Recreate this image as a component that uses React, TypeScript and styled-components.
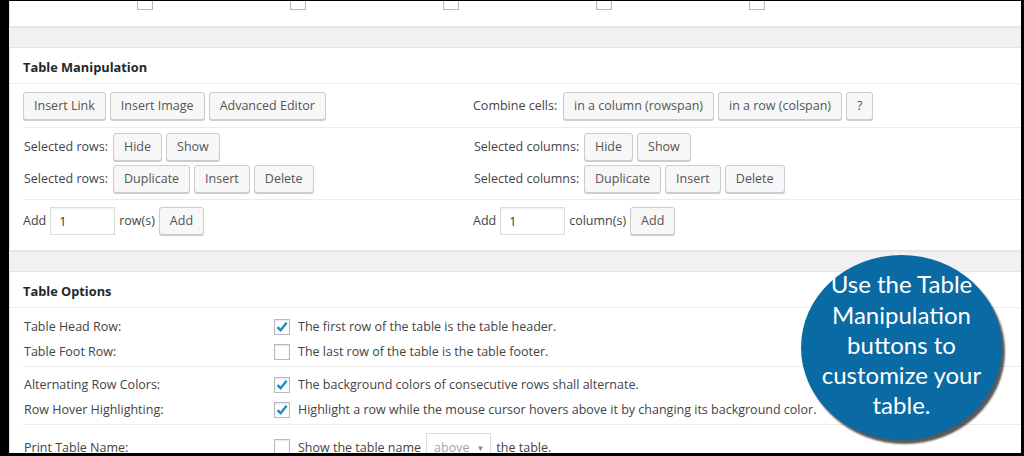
import type { FC, ReactNode } from 'react';
import styled, { createGlobalStyle } from 'styled-components';

const GlobalStyle = createGlobalStyle`
  html, body {
    margin: 0;
    padding: 0;
    background: #000;
  }
  * {
    box-sizing: border-box;
  }
`;

const Frame = styled.div`
  position: relative;
  width: 1024px;
  height: 456px;
  padding: 1px 3px 3px 9px;
  background: #000;
  font-family: 'Open Sans', 'Noto Sans', sans-serif;
  font-size: 12.5px;
  color: #444;
`;

const Screen = styled.div`
  display: flex;
  flex-direction: column;
  gap: 20px;
  height: 100%;
  overflow: hidden;
  background: #f1f1f1;
`;

const Panel = styled.section<{ $clipTop?: boolean }>`
  flex: none;
  margin-right: -2px;
  margin-top: ${(p) => (p.$clipTop ? '-20px' : '0')};
  background: #fff;
  border: 1px solid #e5e5e5;
  box-shadow: 0 1px 1px rgba(0, 0, 0, 0.04);
`;

const PanelTitle = styled.h2`
  margin: 0;
  padding: 10px 13px 7px;
  font-size: 12.8px;
  line-height: 18px;
  font-weight: 700;
  color: #23282d;
  border-bottom: 1px solid #eee;
`;

const CheckStrip = styled.div`
  display: flex;
  padding: 12px 0 16px 127px;
  gap: 137px;
`;

const Body = styled.div`
  padding: 0 0 0 13px;
`;

const Row = styled.div<{ $pad: string; $last?: boolean }>`
  display: grid;
  grid-template-columns: 450px 1fr;
  padding: ${(p) => p.$pad};
  border-bottom: ${(p) => (p.$last ? 'none' : '1px solid #ececec')};
`;

const Cell = styled.div`
  display: flex;
  flex-direction: column;
  gap: 4px;
  padding-left: 1px;
`;

const Line = styled.div`
  display: flex;
  align-items: center;
  gap: 4px;
`;

const Label = styled.span<{ $w?: number }>`
  width: ${(p) => (p.$w ? `${p.$w}px` : 'auto')};
  flex: none;
  white-space: nowrap;
  line-height: 18px;
`;

const Button = styled.button`
  height: 28px;
  padding: 0 10px;
  font: inherit;
  font-size: 12.5px;
  line-height: 26px;
  color: #555;
  background: #f7f7f7;
  border: 1px solid #ccc;
  border-radius: 3px;
  box-shadow: 0 1px 0 #ccc;
  white-space: nowrap;
`;

const NumberInput = styled.input`
  width: 65px;
  height: 28px;
  padding: 0 8px;
  font: inherit;
  font-size: 12.5px;
  color: #32373c;
  background: #fff;
  border: 1px solid #ddd;
  box-shadow: inset 0 1px 2px rgba(0, 0, 0, 0.07);
`;

const OptionGroup = styled.div<{ $pad: string; $last?: boolean }>`
  padding: ${(p) => p.$pad};
  margin-left: 13px;
  border-bottom: ${(p) => (p.$last ? 'none' : '1px solid #ececec')};
`;

const OptionRow = styled.div`
  display: grid;
  grid-template-columns: 250px 1fr;
  align-items: center;
  min-height: 25px;
  padding-left: 1px;
`;

const OptionText = styled.div`
  display: flex;
  align-items: center;
  gap: 8px;
  white-space: nowrap;
`;

const Box = styled.span`
  display: inline-flex;
  align-items: center;
  justify-content: center;
  flex: none;
  width: 16px;
  height: 16px;
  background: #fff;
  border: 1px solid #b4b9be;
  box-shadow: inset 0 1px 2px rgba(0, 0, 0, 0.1);
`;

const Select = styled.span`
  display: inline-flex;
  align-items: center;
  gap: 7px;
  height: 28px;
  margin: 0 -3px 0 -3px;
  padding: 0 6px 0 7px;
  color: #a0a5aa;
  border: 1px solid #ddd;
  background: #fff;
`;

const Caret = styled.span`
  font-size: 8px;
  color: #888;
`;

const Callout = styled.div`
  position: absolute;
  left: 801px;
  top: 255px;
  width: 201px;
  height: 185px;
  display: flex;
  align-items: center;
  justify-content: center;
  padding-bottom: 5px;
  border-radius: 50%;
  background: #0a6aa4;
  box-shadow: 3px 4px 2px rgba(0, 0, 0, 0.65);
  color: #fff;
  font-family: Lato, 'Open Sans', sans-serif;
  font-size: 24px;
  line-height: 30.2px;
  text-align: center;
`;

const Check: FC<{ on?: boolean }> = ({ on }) => (
  <Box>
    {on ? (
      <svg width="14" height="14" viewBox="0 0 14 14">
        <path d="M2.5 7.2 L5.6 10.2 L11.6 2.8" fill="none" stroke="#1e8cbe" strokeWidth="2.4" />
      </svg>
    ) : null}
  </Box>
);

const Option: FC<{ label: string; on?: boolean; children: ReactNode }> = ({ label, on, children }) => (
  <OptionRow>
    <span>{label}</span>
    <OptionText>
      <Check on={on} />
      <span>{children}</span>
    </OptionText>
  </OptionRow>
);

const App: FC = () => (
  <Frame>
    <GlobalStyle />
    <Screen>
      <Panel $clipTop>
        <CheckStrip>
          <Check />
          <Check />
          <Check />
          <Check />
          <Check />
        </CheckStrip>
      </Panel>

      <Panel>
        <PanelTitle>Table Manipulation</PanelTitle>
        <Body>
          <Row $pad="8px 0 7px">
            <Line>
              <Button>Insert Link</Button>
              <Button>Insert Image</Button>
              <Button>Advanced Editor</Button>
            </Line>
            <Line>
              <Label $w={86}>Combine cells:</Label>
              <Button>in a column (rowspan)</Button>
              <Button>in a row (colspan)</Button>
              <Button>?</Button>
            </Line>
          </Row>
          <Row $pad="5px 0 6px">
            <Cell>
              <Line>
                <Label $w={85}>Selected rows:</Label>
                <Button>Hide</Button>
                <Button>Show</Button>
              </Line>
              <Line>
                <Label $w={85}>Selected rows:</Label>
                <Button>Duplicate</Button>
                <Button>Insert</Button>
                <Button>Delete</Button>
              </Line>
            </Cell>
            <Cell>
              <Line>
                <Label $w={106}>Selected columns:</Label>
                <Button>Hide</Button>
                <Button>Show</Button>
              </Line>
              <Line>
                <Label $w={106}>Selected columns:</Label>
                <Button>Duplicate</Button>
                <Button>Insert</Button>
                <Button>Delete</Button>
              </Line>
            </Cell>
          </Row>
          <Row $pad="7px 0 15px" $last>
            <Line>
              <Label>Add</Label>
              <NumberInput defaultValue="1" />
              <Label>row(s)</Label>
              <Button>Add</Button>
            </Line>
            <Line>
              <Label>Add</Label>
              <NumberInput defaultValue="1" />
              <Label>column(s)</Label>
              <Button>Add</Button>
            </Line>
          </Row>
        </Body>
      </Panel>

      <Panel>
        <PanelTitle>Table Options</PanelTitle>
        <OptionGroup $pad="6px 0 2px">
          <Option label="Table Head Row:" on>
            The first row of the table is the table header.
          </Option>
          <Option label="Table Foot Row:">The last row of the table is the table footer.</Option>
        </OptionGroup>
        <OptionGroup $pad="5px 0 2px">
          <Option label="Alternating Row Colors:" on>
            The background colors of consecutive rows shall alternate.
          </Option>
          <Option label="Row Hover Highlighting:" on>
            Highlight a row while the mouse cursor hovers above it by changing its background color.
          </Option>
        </OptionGroup>
        <OptionGroup $pad="8px 0 6px" $last>
          <Option label="Print Table Name:">
            <OptionText>
              Show the table name
              <Select>
                above <Caret>▼</Caret>
              </Select>
              the table.
            </OptionText>
          </Option>
        </OptionGroup>
      </Panel>
    </Screen>

    <Callout>
      <div>
        Use the Table
        <br />
        Manipulation
        <br />
        buttons to
        <br />
        customize your
        <br />
        table.
      </div>
    </Callout>
  </Frame>
);

export default App;
